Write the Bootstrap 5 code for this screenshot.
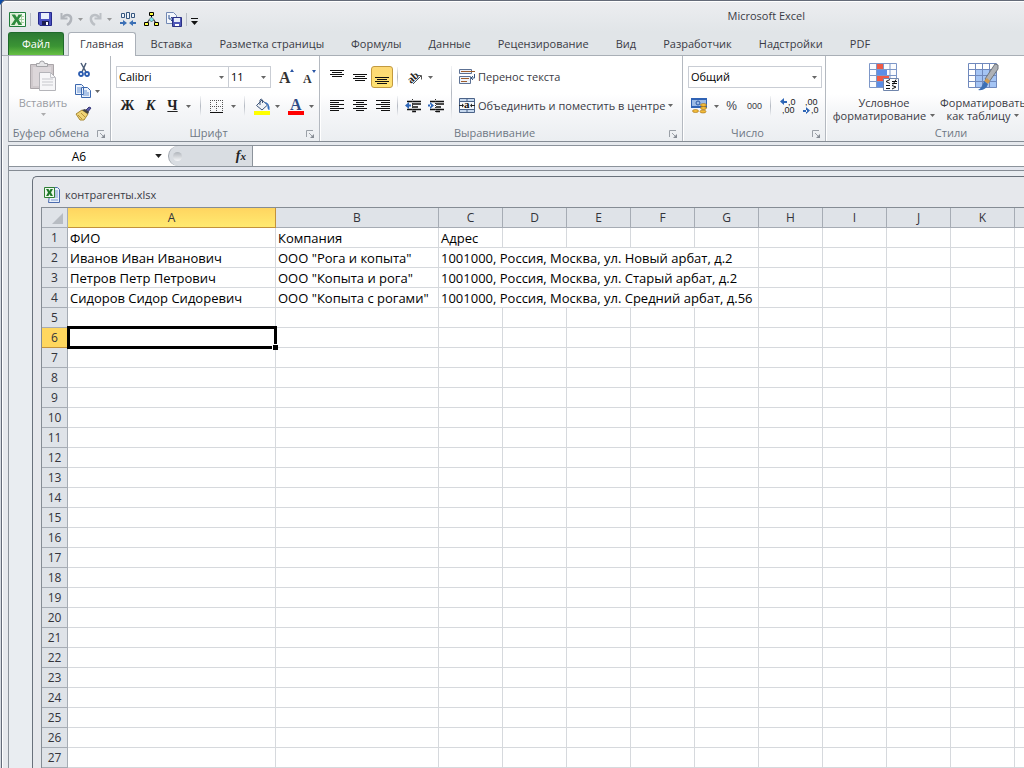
<!DOCTYPE html>
<html lang="ru">
<head>
<meta charset="utf-8">
<meta name="viewport" content="width=device-width, initial-scale=1">
<title>Microsoft Excel</title>
<link href="https://cdn.jsdelivr.net/npm/bootstrap@5.3.0/dist/css/bootstrap.min.css" rel="stylesheet">
<style>
:root{--line:#8c939b;--grid:#d6d9dd;--ink:#3a3b45}
body{font-family:"Open Sans","Noto Sans",sans-serif;font-size:11px;line-height:13px;color:var(--ink);background:linear-gradient(135deg,#0a4aa8 3px,#d5dae0 4px);padding-left:1px}
svg{display:block;flex:none;overflow:visible}
.app{background:#e6e9ed;border:solid #646b79;border-width:1px 0 0 1px;border-top-left-radius:5px;box-shadow:inset 1px 1px #fff}
.titlebar{height:31px;padding:4px 0 0 7px;background:linear-gradient(#ecedf0,#e1e5e8);border-top:1px solid #fff;border-top-left-radius:5px}
.app-title{font-size:11px;margin-right:219px;padding-top:3px}
.ico,.tool{border:0;background:none;padding:0;color:inherit;display:flex;align-items:center;justify-content:center;height:22px;border-radius:3px;flex:none}
.ico{width:23px}
.tool{width:34px;gap:4px}
.ico.active{background:linear-gradient(#fdd975,#ffe372);border:1px solid #c29a3f;width:22px;margin-right:1px}
.qat .ico{width:16px}
.qat .rule{height:13px}
.rule{width:1px;background:#b9bec7;flex:none}
.tabs{height:24px;padding-left:6px;background:#e1e5e8;border-bottom:1px solid #a9afb6}
.tabs .nav-link{height:23px;padding:5px 13px 0 14px;border:0;color:var(--ink);font-size:11px;line-height:14px;white-space:nowrap}
.tabs .nav-link.file{background:linear-gradient(#2d7a34,#3b9434 60%,#67c043);color:#fff;border:1px solid #1f6a2b;border-bottom:0;border-radius:3px 3px 0 0;width:56px;padding:4px 0 0;text-align:center}
.tabs .nav-link.active{background:#fff;border:1px solid #aab0b8;border-bottom:0;border-radius:3px 3px 0 0;height:24px;margin:0 1px 0 4px;padding:4px 11px 0}
.ribbon{height:86px;margin-left:6px;background:linear-gradient(#fff 45%,#f5f6f8 65%,#ebeef1);border-left:1px solid #a3a9b1;border-bottom:1px solid #858c94}
.group{border-right:1px solid #b4b9c0;box-shadow:1px 0 #fff;flex:none}
.group-body{height:70px;padding:10px 5px 0}
.group-name{height:15px;color:#6f7884;padding-right:5px;line-height:13px}
.rows{display:flex;flex-direction:column;gap:7px}
.rows>div{display:flex;height:22px;align-items:center}
.rows .rule{height:20px;margin:0 5px 0 4px;background:linear-gradient(#f4f5f7,#b4b9c2,#f4f5f7)}
.rows .rule-tight{margin:0 3px}
.combo{height:22px;border:1px solid #c9cdd4;border-radius:0;font-size:11px;line-height:14px;color:#000;padding:0 12px 0 2px;background-color:#fff;background-size:5px 3px;background-position:right 4px center;background-image:url("data:image/svg+xml,%3Csvg xmlns='http://www.w3.org/2000/svg' viewBox='0 0 5 3'%3E%3Cpath fill='%23666' d='M0 0h5L2.5 3z'/%3E%3C/svg%3E")}
.combo-name{width:113px;flex:none}
.combo-size{width:42px;flex:none}
.wide-tool{border:0;background:none;padding:0 0 1px;color:inherit;display:flex;align-items:center;gap:3px;height:22px;white-space:nowrap}
.big-tool{border:0;background:none;padding:0;color:inherit;display:flex;flex-direction:column;align-items:center;white-space:nowrap;flex:none}
.glyph{font-family:"Liberation Serif",serif;font-weight:700;font-size:14px;line-height:16px;color:#222}
.num{font-family:"Liberation Sans",sans-serif;font-size:9px}
.formula{height:22px;margin:3px 0 0 6px;border:1px solid var(--line);border-right:0;background:#d9dde2}
.formula input{border:0;background:#fff;font-size:12px;color:#000;padding:0;outline:0}
.formula .name-box{width:146px;text-align:center;padding-right:6px}
.fx-zone{width:85px;border:1px solid #a0a6ae;border-right-color:var(--line);border-width:0 1px;border-radius:11px 0 0 11px;padding:0 6px 0 4px;background:#d9dde2}
.fx-zone .glyph small{font-size:11px}
.knob{width:9px;height:9px;border-radius:50%;background:linear-gradient(#b0b5bb,#f5f6f8)}
.below{height:4px;margin-left:6px;background:#e3e6ee;border-bottom:1px solid #858c94;border-left:1px solid var(--line)}
.desk{margin-left:6px;border-left:1px solid var(--line);background:#e9edf1;padding:5px 0 0 23px}
.book{border:solid #69717b;border-width:1px 0 0 1px;border-top-left-radius:5px;background:#e6e8ec;padding-left:8px}
.book-name{height:30px;padding:5px 0 0 3px;gap:4px}
.pane{border:solid #858c94;border-width:1px 0 0 1px;background:#fff}
.sheet{table-layout:fixed;width:1037px;border-collapse:separate;border-spacing:0;font-size:13px;line-height:18px;color:#000}
.sheet th,.sheet td{height:20px;padding:0 2px;border:solid var(--grid);border-width:0 1px 1px 0;white-space:nowrap;font-weight:400}
.sheet th{background:#dfe3e8;border-color:#a6acb4;text-align:center;padding:1px 0 0;color:#33343b;font-size:12px}
.sheet thead th.on{background:linear-gradient(#ffd560,#ffea70);border-color:#c3923b}
.sheet tbody th.on{background:#ffd75e;border-color:#c3923b}
.picked{position:relative}
.picked::before{content:"";position:absolute;inset:-2px -2px -2px -1px;border:3px solid #000}
.picked::after{content:"";position:absolute;right:-3px;bottom:-3px;width:6px;height:6px;background:#000;border:solid #fff;border-width:1px 0 0 1px}
.c-row{width:26px}.c-a{width:208px}.c-b{width:163px}.c-std{width:64px}
</style>
</head>
<body class="vh-100 overflow-hidden">
<svg width="0" height="0" class="position-absolute" aria-hidden="true"><defs>
<symbol id="caret" viewBox="0 0 5 3"><path d="M0 0h5L2.500 3z" fill="#666"/></symbol>
<symbol id="launch" viewBox="0 0 8 8"><path d="M.5 7V.5H7M3 3l3 3" stroke="#9aa0a7" fill="none"/><path d="M8 4v4H4z" fill="#868c94"/></symbol>
</defs></svg>
<div class="app d-flex flex-column h-100 overflow-hidden">
  <header class="titlebar d-flex flex-shrink-0">
    <div class="qat d-flex align-items-center">
      <svg width="17" height="17" viewBox="0 0 17 17"><path d="M.5 1.500h16v14H.5z" fill="#f4faf2" stroke="#217d3c"/><path d="M1 2h9v13H1z" fill="#dff0d8"/><path d="M12.500 3v11M10 5.500h5M10 8.500h5M10 11.500h5" stroke="#a5cfa0"/><path d="M2.500 3.500h3.500L8 6.500 9.500 3.500H13L9.500 8.500 13 14H9.500L7.500 10.500 5.500 14H2L5.800 8.500z" fill="#2e8b3d"/></svg>
      <span class="rule ms-1"></span>
      <button class="ico" style="margin:0 5px 0 6px" aria-label="Сохранить"><svg width="14" height="14" viewBox="0 0 14 14"><path d="M.5.500h13v13H2L.5 12z" fill="#4a50c0" stroke="#25298a"/><path d="M3 1h8v6H3z" fill="#e9effc"/><path d="M4 9h7v4H4z" fill="#1c1e50"/><path d="M8 10h2v3H8z" fill="#fff"/></svg></button>
      <button class="ico" aria-label="Отменить"><svg width="13" height="13" viewBox="0 0 13 13"><path d="M1.500 0v5.500h6" fill="none" stroke="#b1b5bb" stroke-width="2"/><path d="M2.500 5C6 0 12 2 11 7q-.5 3-4 5" fill="none" stroke="#b1b5bb" stroke-width="2.500"/></svg></button>
      <svg class="mx-1" width="5" height="3"><use href="#caret" opacity=".6"/></svg>
      <button class="ico" aria-label="Вернуть"><svg width="13" height="13" viewBox="0 0 13 13"><path d="M11.500 0v5.500h-6" fill="none" stroke="#bcc0c5" stroke-width="2"/><path d="M10.500 5C7 0 1 2 2 7q.5 3 4 5" fill="none" stroke="#bcc0c5" stroke-width="2.500"/></svg></button>
      <svg class="mx-1" width="5" height="3"><use href="#caret" opacity=".6"/></svg>
      <button class="ico ms-1" aria-label="Распределить"><svg width="16" height="14" viewBox="0 0 16 14"><path d="M1.500 1.500h3v4h-3zM6.500.500h3v6h-3zM11.500 1.500h3v4h-3z" fill="#eef3fa" stroke="#36577f"/><path d="M0 11h4M16 11h-4" stroke="#3b6fb5" stroke-width="2"/><path d="M3 8l4 3-4 3zM13 8l-4 3 4 3z" fill="#3b6fb5"/></svg></button>
      <button class="ico mx-2" style="width:14px" aria-label="Структура"><svg width="15" height="15" viewBox="0 0 15 15"><path d="M7.500 4v3M6 7L3 11M9 7l3 4" stroke="#000"/><path d="M5.500.500h4v3h-4zM.5 10.500h4v3h-4zM10.500 10.500h4v3h-4z" fill="#ff4" stroke="#000"/><path d="M7.500 5L10 7.500 7.500 10 5 7.500z" fill="#7de8ef" stroke="#333" stroke-width=".5"/></svg></button>
      <button class="ico" aria-label="Сохранить как"><svg width="16" height="15" viewBox="0 0 16 15"><path d="M.5.500h7l3 3v8H.5z" fill="#f3f6fb" stroke="#7289b4"/><path d="M3 3v4h3M5 5l2 2-2 2" fill="none" stroke="#2b4f8e"/><path d="M6.500 5.500h9v9h-9z" fill="#4f58b8" stroke="#2b3184"/><path d="M8 6h6v4H8z" fill="#e6ecfa"/><path d="M9 12h4v2H9z" fill="#fff"/></svg></button>
      <span class="rule ms-1"></span>
      <svg class="ms-1 mt-1" width="7" height="7" viewBox="0 0 7 7"><path d="M0 0h7v1H0zM0 3h7L3.500 7z" fill="#111"/></svg>
    </div>
    <div class="app-title ms-auto">Microsoft Excel</div>
  </header>
  <nav class="tabs nav flex-nowrap flex-shrink-0">
    <a class="nav-link file" href="#">Файл</a>
    <a class="nav-link active" href="#" aria-current="page">Главная</a>
    <a class="nav-link" href="#">Вставка</a>
    <a class="nav-link" href="#">Разметка страницы</a>
    <a class="nav-link" href="#">Формулы</a>
    <a class="nav-link" href="#">Данные</a>
    <a class="nav-link" href="#">Рецензирование</a>
    <a class="nav-link" href="#">Вид</a>
    <a class="nav-link" href="#">Разработчик</a>
    <a class="nav-link" href="#">Надстройки</a>
    <a class="nav-link" href="#">PDF</a>
  </nav>
  <main class="d-flex flex-column flex-grow-1 overflow-hidden">
  <div class="ribbon d-flex flex-shrink-0 overflow-hidden">
    <section class="group" style="width:102px">
      <div class="group-body d-flex pt-1">
        <button class="big-tool" style="width:58px;color:#9a9da3"><svg width="30" height="33" viewBox="0 0 30 33"><path d="M2.500 4.500h23v24h-23z" fill="#cfc9cc" stroke="#aaa5a9"/><path d="M5 7h18v19H5z" fill="#dcd7da"/><path d="M8.500 6.500v-3h3a2.500 2.500 0 015 0h3v3z" fill="#e6e6e8" stroke="#a3a3a6"/><path d="M11.500 12.500h11l5 5v13h-16z" fill="#f6f6f8" stroke="#b4b4b9"/><path d="M22.500 12.500v5h5M14 19h11M14 22h11M14 25h11" fill="none" stroke="#c6c7cc"/></svg><span style="margin-top:3px">Вставить</span><svg class="mt-1" width="5" height="3"><use href="#caret" opacity=".5"/></svg></button>
        <div>
          <button class="ico" style="height:20px" aria-label="Вырезать"><svg width="12" height="15" viewBox="0 0 12 15"><path d="M3 0l5 9M8 0L4 9" stroke="#4a5c78" stroke-width="1.500"/><circle cx="3" cy="11" r="2" fill="none" stroke="#2b5cb0" stroke-width="1.800"/><circle cx="9" cy="11" r="2" fill="none" stroke="#2b5cb0" stroke-width="1.800"/></svg></button>
          <button class="tool" style="width:31px" aria-label="Копировать"><svg width="16" height="14" viewBox="0 0 16 14"><path d="M.5.500h6l2 2v8h-8zM6.500 3.500h6l3 3v7h-9z" fill="#edf3fc" stroke="#3c68ae"/><path d="M2 4h4M2 6h4M2 8h4M8 7h4M8 9h6M8 11h6" stroke="#6b94d2"/></svg><svg width="5" height="3"><use href="#caret"/></svg></button>
          <button class="ico" aria-label="Формат по образцу"><svg width="17" height="14" viewBox="0 0 17 14"><path d="M10 5l4-4 2 1-4 5z" fill="#5a5aa8" stroke="#38387a"/><path d="M1 8l6-4 6 4-4 6H5z" fill="#efd477" stroke="#a78832"/><path d="M7 4l3-1 4 3-1 2z" fill="#444"/><path d="M3 9l4 4M6 7l4 4" stroke="#b99238"/></svg></button>
        </div>
      </div>
      <div class="group-name d-flex"><span class="text-center" style="width:84px">Буфер обмена</span><svg class="mt-1 ms-auto" width="8" height="8"><use href="#launch"/></svg></div>
    </section>
    <section class="group" style="width:209px">
      <div class="group-body rows">
        <div>
          <select class="combo combo-name form-select" aria-label="Шрифт"><option>Calibri</option></select>
          <select class="combo combo-size form-select border-start-0" aria-label="Размер шрифта"><option>11</option></select>
          <button class="ico ms-1" aria-label="Увеличить размер"><svg width="16" height="18" viewBox="0 0 16 18"><text x="0" y="15" font-family="Liberation Serif" font-weight="700" font-size="16" fill="#333">A</text><path d="M11 4l2-3 2 3z" fill="#2a55a5"/></svg></button>
          <button class="ico" aria-label="Уменьшить размер"><svg width="14" height="18" viewBox="0 0 14 18"><text x="0" y="15" font-family="Liberation Serif" font-weight="700" font-size="12" fill="#333">A</text><path d="M9 2l2 3 2-3z" fill="#2a55a5"/></svg></button>
        </div>
        <div>
          <button class="ico glyph">Ж</button><button class="ico glyph fst-italic">К</button>
          <button class="tool"><span class="glyph text-decoration-underline">Ч</span><svg class="ms-1" width="5" height="3"><use href="#caret"/></svg></button><span class="rule"></span>
          <button class="tool" aria-label="Границы"><svg width="13" height="13" viewBox="0 0 13 13"><path d="M0 .5h13M0 6.500h13M.5 0v13M6.500 0v13M12.500 0v13" stroke="#555" stroke-dasharray="1 1"/><path d="M0 12.500h13" stroke="#111"/></svg><svg class="ms-1" width="5" height="3"><use href="#caret"/></svg></button><span class="rule"></span>
          <button class="tool" aria-label="Цвет заливки"><svg width="17" height="17" viewBox="0 0 17 17"><path d="M2.500 7.500L8 2l5.500 5L8 12z" fill="#eef2f7" stroke="#3e5578"/><path d="M6 7V2q1-2 2.500 0v3" fill="none" stroke="#3e5578"/><path d="M10 4q6 0 5.500 8-2.500 0-2-5z" fill="#3470c0"/><path d="M0 13h16v4H0z" fill="#ff0"/></svg><svg width="5" height="3"><use href="#caret"/></svg></button>
          <button class="tool" aria-label="Цвет текста"><svg width="17" height="17" viewBox="0 0 17 17"><text x="2" y="12" font-family="Liberation Serif" font-weight="700" font-size="16" fill="#2f4c86">A</text><path d="M0 13h16v4H0z" fill="#f00"/></svg><svg width="5" height="3"><use href="#caret"/></svg></button>
        </div>
      </div>
      <div class="group-name d-flex"><span class="flex-grow-1 text-center">Шрифт</span><svg class="mt-1" width="8" height="8"><use href="#launch"/></svg></div>
    </section>
    <section class="group" style="width:363px">
      <div class="group-body d-flex">
        <div class="rows">
          <div>
            <button class="ico" aria-label="По верхнему краю"><svg width="14" height="16"><path d="M0 1.500h14M2 3.500h10M0 5.500h14M2 7.500h10" stroke="#111"/></svg></button>
            <button class="ico" aria-label="По середине"><svg width="14" height="16"><path d="M0 5.500h14M2 7.500h10M0 9.500h14M2 11.500h10" stroke="#111"/></svg></button>
            <button class="ico active" aria-label="По нижнему краю"><svg width="14" height="16"><path d="M0 8.500h14M2 10.500h10M0 12.500h14M2 14.500h10" stroke="#111"/></svg></button><span class="rule rule-tight"></span>
            <button class="tool" style="width:38px" aria-label="Ориентация"><svg width="17" height="15" viewBox="0 0 17 15"><text x="1" y="12" transform="rotate(-42 5 9)" font-family="Liberation Serif" font-weight="700" font-size="11" fill="#222">ab</text><path d="M6 14l8-8M10.500 5.500h4v4" fill="none" stroke="#555"/></svg><svg width="5" height="3"><use href="#caret"/></svg></button>
          </div>
          <div>
            <button class="ico" aria-label="По левому краю"><svg width="14" height="12"><path d="M0 .5h14M0 2.500h9M0 4.500h14M0 6.500h9M0 8.500h14M0 10.500h9" stroke="#111"/></svg></button>
            <button class="ico" aria-label="По центру"><svg width="14" height="12"><path d="M0 .5h14M3 2.500h8M0 4.500h14M3 6.500h8M0 8.500h14M3 10.500h8" stroke="#111"/></svg></button>
            <button class="ico" aria-label="По правому краю"><svg width="14" height="12"><path d="M0 .5h14M5 2.500h9M0 4.500h14M5 6.500h9M0 8.500h14M5 10.500h9" stroke="#111"/></svg></button><span class="rule rule-tight"></span>
            <button class="ico" aria-label="Уменьшить отступ"><svg width="16" height="14" viewBox="0 0 16 14"><path d="M2 2.500h14M7 5h9M7 8h6M2 10.500h14M7 12.500h4" stroke="#111" stroke-width="1.500"/><path d="M0 6.500L4 3v7zM3 5.500h3v2H3z" fill="#2f67b7"/><path d="M7.500 0v14" stroke="#333" stroke-dasharray="1 1"/></svg></button>
            <button class="ico" aria-label="Увеличить отступ"><svg width="16" height="14" viewBox="0 0 16 14"><path d="M2 2.500h14M8 5h8M8 8h5M2 10.500h14M8 12.500h4" stroke="#111" stroke-width="1.500"/><path d="M6 6.500L2 3v7zM0 5.500h3v2H0z" fill="#2f67b7"/><path d="M7.500 0v14" stroke="#333" stroke-dasharray="1 1"/></svg></button>
          </div>
        </div>
        <span class="rule" style="height:54px;margin:0 7px 0 4px;background:linear-gradient(#f2f3f5,#b4b9c2,#f2f3f5)"></span>
        <div class="rows">
          <div><button class="wide-tool"><svg width="16" height="16" viewBox="0 0 16 16"><path d="M.5.500h12v4H.5zM.5 7.500h11v7H.5z" fill="#eef2f8" stroke="#5c7194"/><path d="M2 2.500h14M2 9.500h8M2 12.500h6" stroke="#9c5c2c"/><path d="M15.500 5v4h-3M14 7l-2 2 2 2" fill="none" stroke="#37557f"/></svg>Перенос текста</button></div>
          <div><button class="wide-tool"><svg width="16" height="15" viewBox="0 0 16 15"><path d="M.5.500h15v14H.5zM.5 3.500h15M.5 11.500h15M8 0v4M8 11v4" fill="#c6d8ee" stroke="#4b6388"/><path d="M1 4h14v7H1z" fill="#f5f8fc"/><path d="M0 7.500h4M12 7.500h4" stroke="#222"/><path d="M3 5.500l2 2-2 2zM13 5.500l-2 2 2 2z" fill="#222"/><text x="5" y="10" font-family="Liberation Serif" font-weight="700" font-size="11" fill="#111">a</text></svg>Объединить и поместить в центре<svg width="5" height="3"><use href="#caret"/></svg></button></div>
        </div>
      </div>
      <div class="group-name d-flex"><span class="flex-grow-1 text-center">Выравнивание</span><svg class="mt-1" width="8" height="8"><use href="#launch"/></svg></div>
    </section>
    <section class="group" style="width:143px">
      <div class="group-body rows" style="padding-right:3px">
        <div><select class="combo form-select" aria-label="Числовой формат"><option>Общий</option></select></div>
        <div>
          <button class="tool" style="width:32px;gap:3px" aria-label="Финансовый формат"><svg width="17" height="16" viewBox="0 0 17 16"><path d="M1 0h16v10H1z" fill="#2f62b4"/><path d="M2 2h14v6H2z" fill="#9dbbe6"/><circle cx="8" cy="5" r="2" fill="none" stroke="#2d5aa5"/><ellipse cx="13.500" cy="7" rx="3" ry="1.500" fill="#f3bc3a" stroke="#a06c10" stroke-width=".6"/><ellipse cx="13.500" cy="10" rx="3" ry="1.500" fill="#f3bc3a" stroke="#a06c10" stroke-width=".6"/><ellipse cx="13" cy="13.500" rx="3" ry="1.500" fill="#f3bc3a" stroke="#a06c10" stroke-width=".6"/><ellipse cx="5.500" cy="13" rx="3" ry="1.500" fill="#f3bc3a" stroke="#a06c10" stroke-width=".6"/></svg><svg class="ms-1" width="5" height="3"><use href="#caret"/></svg></button>
          <button class="ico"><span class="num" style="font-size:12px">%</span></button><button class="ico num">000</button><span class="rule"></span>
          <button class="ico" aria-label="Увеличить разрядность"><svg width="16" height="16" viewBox="0 0 16 16"><path d="M0 3.500L4 0v7zM3 3h4v2H3z" fill="#2f67b7"/><text class="num" x="8" y="7" fill="#222">,0</text><text class="num" x="2" y="15" fill="#222">,00</text></svg></button>
          <button class="ico" aria-label="Уменьшить разрядность"><svg width="16" height="16" viewBox="0 0 16 16"><path d="M7 12.500L3 9v7zM0 12h4v2H0z" fill="#2f67b7"/><text class="num" x="2" y="7" fill="#222">,00</text><text class="num" x="8" y="15" fill="#222">,0</text></svg></button>
        </div>
      </div>
      <div class="group-name d-flex"><span class="flex-grow-1 text-center">Число</span><svg class="mt-1" width="8" height="8"><use href="#launch"/></svg></div>
    </section>
    <section class="group" style="width:256px">
      <div class="group-body d-flex gap-1" style="padding-top:7px">
        <button class="big-tool" style="width:106px"><svg width="30" height="29" viewBox="0 0 30 29"><path d="M.5.500h27v24H.5z" fill="#fbfcfe"/><path d="M8 0h6v7H8zM8 13h12v6H8z" fill="#f05a45"/><path d="M8 7h10v6H8zM8 19h6v6H8z" fill="#5d8ee6"/><path d="M.5.500h27v24H.5zM7.500 0v25M14.500 0v7M14.500 19v6M21 0v25M0 6.500h28M0 12.500h28M0 18.500h28" fill="none" stroke="#7d97c8"/><path d="M14.500 15.500h15v12h-15z" fill="#fff" stroke="#6f85ac"/><path d="M21 16.500l-4 2 4 2M17 22.500h4M17 25.500h4M23 18.500h5M23 20.500h5M27 16.500l-3 5M23 22.500l4 1.500-4 2" fill="none" stroke="#111"/></svg><span class="mt-1">Условное</span><span class="d-flex align-items-center">форматирование<svg width="5" height="3" class="ms-1"><use href="#caret"/></svg></span></button>
        <button class="big-tool" style="width:84px"><svg width="31" height="29" viewBox="0 0 31 29"><path d="M.5.500h28v24H.5z" fill="#fff"/><path d="M7 7h22v18H7z" fill="#a4c4f4"/><path d="M.5.500h28v24H.5zM7.500 0v25M14.500 0v25M21.500 0v25M0 6.500h29M0 12.500h29M0 18.500h29" fill="none" stroke="#7089bd"/><path d="M27 1l3 1v4l-9 13-4-3z" fill="#aeb1b6" stroke="#6e737a"/><path d="M19 15l3 3-2 3-4-3z" fill="#d09a50"/><path d="M16 18l4 3q-2 7-10 6 4-2 6-9z" fill="#3c6fb4"/></svg><span class="mt-1">Форматировать</span><span class="d-flex align-items-center">как таблицу<svg width="5" height="3" class="ms-1"><use href="#caret"/></svg></span></button>
      </div>
      <div class="group-name text-center">Стили</div>
    </section>
  </div>
  <div class="formula d-flex flex-shrink-0">
    <input class="name-box" value="A6" aria-label="Имя">
    <div class="bg-white d-flex align-items-center" style="width:13px"><svg width="7" height="4" viewBox="0 0 5 3"><path d="M0 0h5L2.500 3z" fill="#222"/></svg></div>
    <div class="bg-white flex-shrink-0"><div class="fx-zone h-100 d-flex align-items-center justify-content-between"><span class="knob"></span><span class="glyph fst-italic">f<small>x</small></span></div></div>
    <input class="flex-grow-1" aria-label="Строка формул">
  </div>
  <div class="below flex-shrink-0"></div>
  <div class="desk flex-grow-1 overflow-hidden">
    <div class="book h-100 overflow-hidden">
      <div class="book-name d-flex align-items-center"><svg width="17" height="16" viewBox="0 0 17 16"><path d="M6.500.500h7l2 2v13h-11z" fill="#e9f0fb" stroke="#4b6cae"/><path d="M11 4h3M11 6h3M11 8h3M11 10h3M7 13h7" stroke="#7c9bd0"/><path d="M.5.500h10v10H.5z" fill="#eef7ec" stroke="#2f7f35"/><path d="M2 2h2.500l1 2 1-2H9L7 5.500 9 9H6.500l-1-2-1 2H2l2-3.500z" fill="#1f7a2a"/></svg><span>контрагенты.xlsx</span></div>
      <div class="pane">
        <table class="sheet">
          <colgroup><col class="c-row"><col class="c-a"><col class="c-b"><col class="c-std"><col class="c-std"><col class="c-std"><col class="c-std"><col class="c-std"><col class="c-std"><col class="c-std"><col class="c-std"><col class="c-std"><col class="c-std"></colgroup>
          <thead><tr><th><svg class="ms-auto me-1" width="11" height="11"><path d="M11 0v11H0z" fill="#b7bcc2"/></svg></th><th class="on">A</th><th>B</th><th>C</th><th>D</th><th>E</th><th>F</th><th>G</th><th>H</th><th>I</th><th>J</th><th>K</th><th>L</th></tr></thead>
          <tbody id="rows"></tbody>
        </table>
      </div>
    </div>
  </div>
  </main>
</div>
<script>
const data = {
  1: ['ФИО', 'Компания', 'Адрес'],
  2: ['Иванов Иван Иванович', 'ООО "Рога и копыта"', '1001000, Россия, Москва, ул. Новый арбат, д.2'],
  3: ['Петров Петр Петрович', 'ООО "Копыта и рога"', '1001000, Россия, Москва, ул. Старый арбат, д.2'],
  4: ['Сидоров Сидор Сидоревич', 'ООО "Копыта с рогами"', '1001000, Россия, Москва, ул. Средний арбат, д.56']
};
const body = document.getElementById('rows');
for (let r = 1; r <= 28; r++) {
  const tr = body.insertRow(), th = document.createElement('th');
  th.textContent = r;
  if (r === 6) th.className = 'on';
  tr.append(th);
  for (let c = 0; c < 12; c++) {
    const td = tr.insertCell();
    td.textContent = (data[r] || [])[c] || '';
    if (r === 6 && c === 0) td.className = 'picked';
    // long addresses spill over the empty cells to their right
    if (c === 2 && td.textContent.length > 20) { td.colSpan = 5; c += 4; }
  }
}
</script>
<script src="https://cdn.jsdelivr.net/npm/bootstrap@5.3.0/dist/js/bootstrap.bundle.min.js"></script>
</body>
</html>
